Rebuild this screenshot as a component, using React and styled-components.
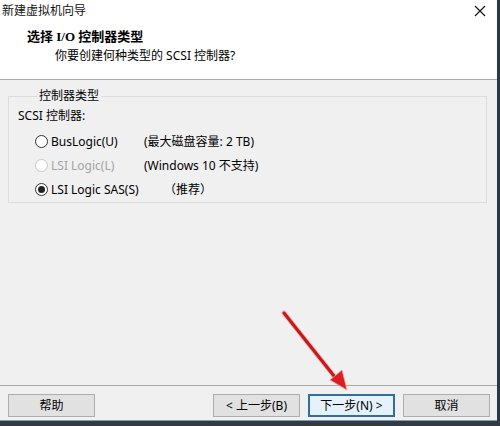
import styled, { createGlobalStyle } from 'styled-components';

const Global = createGlobalStyle`
  html, body {
    margin: 0;
    padding: 0;
    background: #f0f0f0;
  }
  * { box-sizing: border-box; }
`;

const UI_FONT = `"Noto Sans", "Noto Sans CJK SC", sans-serif`;

export default function App() {
  return (
    <>
      <Global />
      <Window>
        <TitleBar>
          <span>新建虚拟机向导</span>
          <CloseIcon width="12" height="12" viewBox="0 0 12 12">
            <path d="M1 1 L11 11 M11 1 L1 11" stroke="#111" strokeWidth="1.1" />
          </CloseIcon>
        </TitleBar>
        <Header>
          <HeaderTitle>选择 I/O 控制器类型</HeaderTitle>
          <HeaderSub>你要创建何种类型的 SCSI 控制器?</HeaderSub>
        </Header>
        <Body>
          <Group>
            <Legend>控制器类型</Legend>
            <GroupLabel>SCSI 控制器:</GroupLabel>
            <Options>
              <Option>
                <Radio />
                <span>BusLogic(U)</span>
              </Option>
              <Note>(最大磁盘容量: 2 TB)</Note>
              <Option disabled>
                <Radio disabled />
                <span>LSI Logic(L)</span>
              </Option>
              <Note>(Windows 10 不支持)</Note>
              <Option>
                <Radio checked />
                <span>LSI Logic SAS(S)</span>
              </Option>
              <Note indent={20}>（推荐）</Note>
            </Options>
          </Group>
        </Body>
        <Footer>
          <Button>帮助</Button>
          <ButtonGroup>
            <Button>&lt; 上一步(B)</Button>
            <Button primary>下一步(N) &gt;</Button>
            <Button>取消</Button>
          </ButtonGroup>
        </Footer>
        <Arrow width="80" height="90" viewBox="0 0 80 90">
          <line x1="4" y1="3" x2="58" y2="71" stroke="#f3b0b0" strokeWidth="5" strokeLinecap="round" />
          <line x1="4" y1="3" x2="58" y2="71" stroke="#c21a1a" strokeWidth="3" strokeLinecap="round" />
          <polygon points="67,80 50,70 62,60" fill="#d81e1e" stroke="#f2a0a0" strokeWidth="0.8" />
        </Arrow>
      </Window>
    </>
  );
}

const Window = styled.div`
  position: relative;
  width: 500px;
  height: 426px;
  display: flex;
  flex-direction: column;
  background: #f0f0f0;
  border-right: 3px solid #2c3846;
  border-bottom: 5px solid #333a42;
  font-family: ${UI_FONT};
  font-size: 12px;
  color: #000;
`;

const TitleBar = styled.div`
  height: 21px;
  background: #fff;
  display: flex;
  align-items: center;
  justify-content: space-between;
  padding: 0 11px 0 2px;
  font-size: 12px;
  line-height: 16px;
  color: #111;
`;

const CloseIcon = styled.svg`
  display: block;
  margin-top: 1px;
`;

const Header = styled.div`
  height: 59px;
  background: #fff;
  border-bottom: 1px solid #a8a8a8;
  padding-top: 8px;
`;

const HeaderTitle = styled.div`
  padding-left: 27px;
  font-family: "Liberation Serif", "Noto Sans CJK SC", serif;
  font-weight: bold;
  font-size: 13px;
  line-height: 16px;
`;

const HeaderSub = styled.div`
  margin-top: 3px;
  padding-left: 55px;
  font-size: 12px;
  line-height: 16px;
`;

const Body = styled.div`
  flex: 1;
  padding: 8px 10px 0 8px;
`;

const Group = styled.fieldset`
  margin: 0;
  min-inline-size: 0;
  border: 1px solid #dcdcdc;
  padding: 4px 9px 1px 9px;
`;

const Legend = styled.legend`
  margin-left: 19px;
  padding: 0 2px;
  line-height: 16px;
  font-size: 12px;
`;

const GroupLabel = styled.div`
  line-height: 16px;
`;

const Options = styled.div`
  display: grid;
  grid-template-columns: 109px 1fr;
  grid-auto-rows: 24px;
  align-items: center;
  margin-top: 5px;
  padding-left: 17px;
`;

const Option = styled.label`
  display: flex;
  align-items: center;
  gap: 3px;
  white-space: nowrap;
  color: ${(p) => (p.disabled ? '#a3a3a3' : '#000')};
`;

const Radio = styled.span`
  width: 13px;
  height: 13px;
  border-radius: 50%;
  border: 1px solid ${(p) => (p.disabled ? '#c8c8c8' : '#333')};
  background: #fff;
  display: flex;
  align-items: center;
  justify-content: center;
  flex-shrink: 0;

  &::after {
    content: '';
    width: 7px;
    height: 7px;
    border-radius: 50%;
    background: ${(p) => (p.checked ? '#222' : 'transparent')};
  }
`;

const Note = styled.span`
  white-space: nowrap;
  padding-left: ${(p) => p.indent || 0}px;
`;

const Footer = styled.div`
  display: flex;
  justify-content: space-between;
  border-top: 1px solid #a8a8a8;
  padding: 8px 7px 3px 8px;
  border-bottom: 1px solid #7d9cbc;
`;

const ButtonGroup = styled.div`
  display: flex;
  gap: 8px;
`;

const Button = styled.button`
  width: 87px;
  height: 23px;
  font-family: ${UI_FONT};
  font-size: 12px;
  color: #000;
  background: ${(p) => (p.primary ? '#e5f1fb' : '#e1e1e1')};
  border: ${(p) => (p.primary ? '2px solid #2f6f9f' : '1px solid #adadad')};
  padding: 0;
  line-height: 16px;
`;

const Arrow = styled.svg`
  position: absolute;
  left: 280px;
  top: 310px;
`;
